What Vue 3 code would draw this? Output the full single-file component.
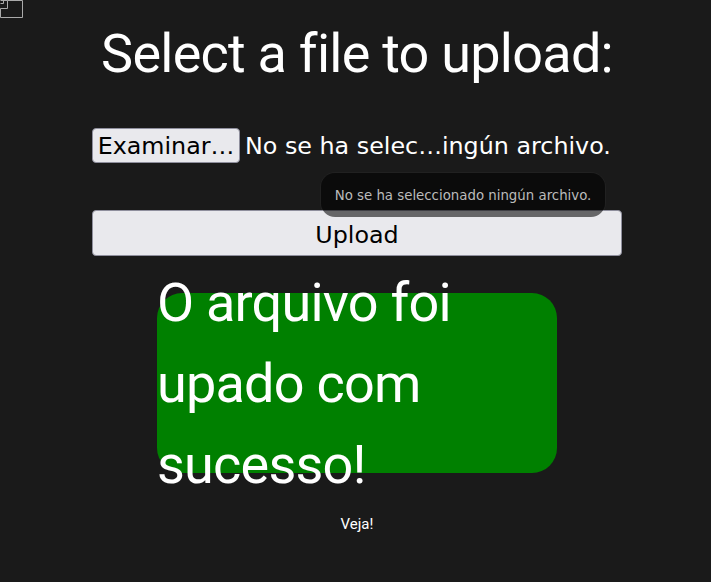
<script setup>
const heading = 'Select a file to upload:'
const fileLabel = 'No se ha selec…ingún archivo.'
const tip = 'No se ha seleccionado ningún archivo.'
</script>

<template>
  <main class="page">
    <svg class="broken" width="23" height="18" viewBox="0 0 23 18" fill="none" stroke="#aaa">
      <path d="M.5 8.5V17.5H22.5V.5H7.5V8.5H.5Z" />
      <path d="M.5 .5H7.5M.5 3.5H3.5V.5" />
    </svg>
    <h1 class="title">{{ heading }}</h1>
    <form class="form" @submit.prevent>
      <div class="file-row">
        <button type="button" class="pick">Examinar…</button>
        <span class="file-name">{{ fileLabel }}</span>
      </div>
      <div class="tooltip">{{ tip }}</div>
      <button type="submit" class="upload">Upload</button>
    </form>
    <div class="success"><span>O arquivo foi upado com sucesso!</span></div>
    <a class="link">Veja!</a>
  </main>
</template>

<style>
html, body { margin: 0; background: #1a1a1a; overflow: hidden; }
</style>

<style scoped>
.page {
  position: relative;
  box-sizing: border-box;
  height: 582px;
  padding-left: 3px;
  overflow: hidden;
  background: #1a1a1a;
  color: #fff;
  display: flex;
  flex-direction: column;
  align-items: center;
  font-family: "Roboto", sans-serif;
  font-variant-ligatures: none;
}
.broken { position: absolute; left: 0; top: 0; }
.title {
  margin: 20px 0 0;
  font-size: 54px;
  line-height: 68px;
  font-weight: 400;
  letter-spacing: -.75px;
  white-space: nowrap;
}
.form {
  position: relative;
  width: 530px;
  margin: 40px 0 0;
  font-family: "DejaVu Sans", sans-serif;
  font-size: 23.8px;
}
.file-row { display: flex; align-items: center; gap: 5px; height: 35px; white-space: nowrap; }
.file-name { padding-top: 1px; }
.pick {
  width: 148px;
  height: 35px;
  padding: 1px 0 0;
  font: inherit;
  color: #000;
  background: #e9e9ed;
  border: 1px solid #8f8f9d;
  border-radius: 4px;
}
.tooltip {
  position: absolute;
  left: 229px;
  top: 45px;
  width: 284px;
  height: 44px;
  box-sizing: border-box;
  padding-top: 1px;
  line-height: 44px;
  text-align: center;
  font-size: 13.33px;
  color: #bbb;
  background: rgba(0, 0, 0, .56);
  box-shadow: 0 0 0 1px rgba(255, 255, 255, .03);
  border-radius: 14px;
  z-index: 1;
}
.upload {
  display: block;
  width: 530px;
  height: 46px;
  margin-top: 47px;
  padding: 3px 0 0;
  font: inherit;
  color: #000;
  background: #e9e9ed;
  border: 1px solid #8f8f9d;
  border-radius: 4px;
}
.success {
  display: flex;
  align-items: center;
  width: 400px;
  height: 180px;
  margin-top: 37px;
  background: #008000;
  border-radius: 25px;
  font-size: 54px;
  line-height: 81px;
  letter-spacing: -.78px;
}
.link { margin-top: 42px; font-size: 15px; color: #fff; }
</style>
